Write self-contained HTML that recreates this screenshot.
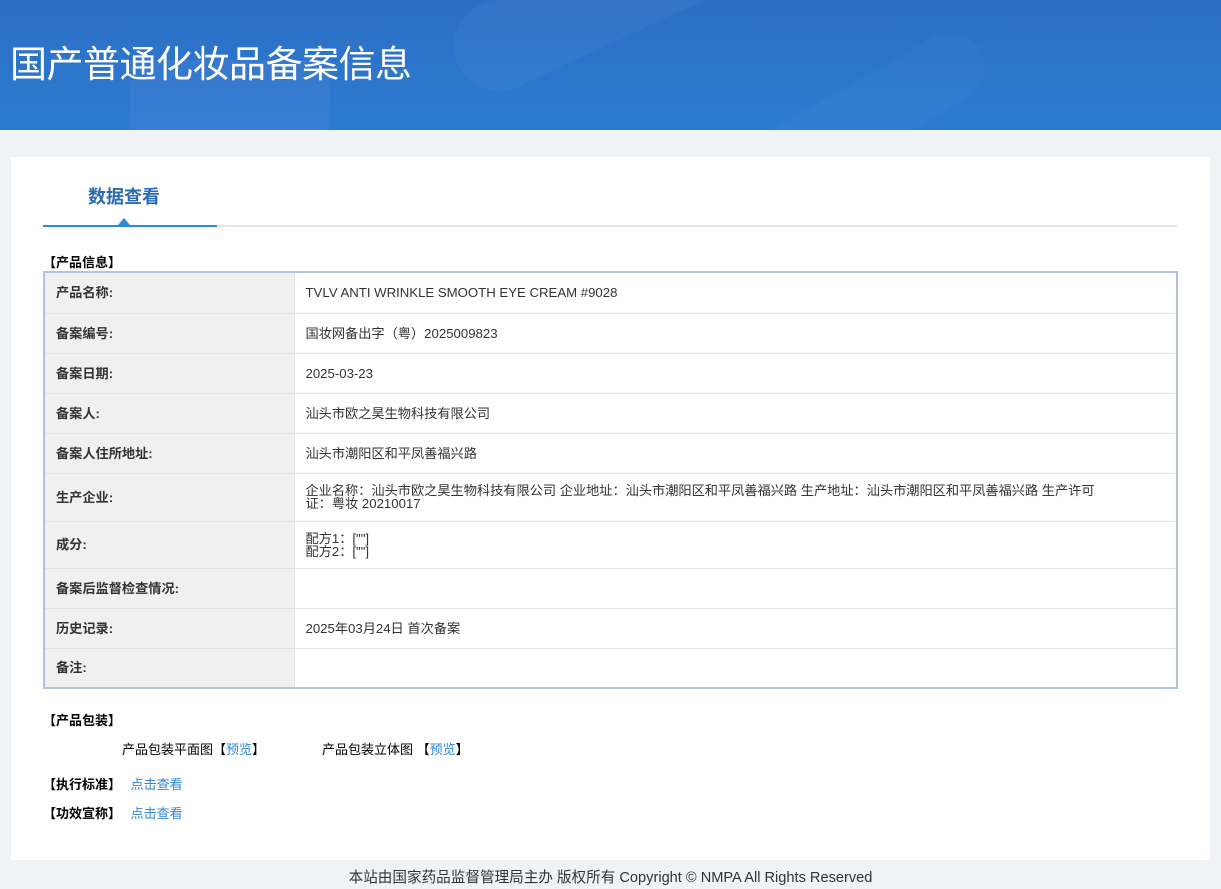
<!DOCTYPE html>
<html><head><meta charset="utf-8"><style>
*{margin:0;padding:0;box-sizing:border-box}
body{width:1221px;height:889px;background:#eff3f6;font-family:"Liberation Sans","Noto Sans CJK SC",sans-serif;font-size:13px;color:#333;position:relative;overflow:hidden}
.hd{position:absolute;left:0;top:0;width:1221px;height:130px;background:linear-gradient(180deg,#2c6fc4 0%,#2b7bd2 100%);overflow:hidden}
.hd h1{position:absolute;left:10px;top:34px;font-size:37px;font-weight:normal;color:#fff;letter-spacing:-0.5px;font-family:"Noto Sans CJK SC",sans-serif}
.panel{position:absolute;left:11px;top:157px;width:1199px;height:703px;background:#fff}
.tab{position:absolute;left:88px;top:183px;font-size:18px;font-weight:bold;color:#2a6ab0}
.line{position:absolute;left:43px;top:225px;width:1134px;height:2px;background:#e4e6ea}
.line2{position:absolute;left:43px;top:225px;width:174px;height:2px;background:#2e87d8}
.tri{position:absolute;left:118px;top:218px;width:0;height:0;border-left:6px solid transparent;border-right:6px solid transparent;border-bottom:7px solid #2e87d8}
.sec{position:absolute;font-weight:bold;color:#000;font-size:13px}
table{position:absolute;left:43px;top:271px;width:1135px;border-collapse:collapse;border:2px solid #b3c4e2}
td{border:1px solid #e3e3e3;padding:0 11px;font-size:13.2px;line-height:13px}
td.l{width:250px;background:#f0f0f0;font-weight:bold;color:#333}
a{color:#2e87d8;text-decoration:none}
.ft{position:absolute;left:0;top:866px;width:1221px;text-align:center;font-size:14.6px;color:#333}
</style></head><body>
<div class="hd">
<div style="position:absolute;left:440px;top:-60px;width:380px;height:90px;border-radius:45px;background:rgba(255,255,255,.03);transform:rotate(-25deg)"></div>
<div style="position:absolute;left:130px;top:60px;width:200px;height:80px;background:rgba(120,150,230,.15)"></div>
<div style="position:absolute;left:700px;top:90px;width:300px;height:70px;border-radius:35px;background:rgba(255,255,255,.025);transform:rotate(-30deg)"></div>
<h1>国产普通化妆品备案信息</h1></div>
<div class="panel"></div>
<div class="tab">数据查看</div>
<div class="line"></div><div class="line2"></div><div class="tri"></div>
<div class="sec" style="left:43px;top:252px">【产品信息】</div>
<table>
<tr style="height:41px"><td class="l">产品名称:</td><td>TVLV ANTI WRINKLE SMOOTH EYE CREAM #9028</td></tr>
<tr style="height:40px"><td class="l">备案编号:</td><td>国妆网备出字（粤）2025009823</td></tr>
<tr style="height:40px"><td class="l">备案日期:</td><td>2025-03-23</td></tr>
<tr style="height:40px"><td class="l">备案人:</td><td>汕头市欧之昊生物科技有限公司</td></tr>
<tr style="height:40px"><td class="l">备案人住所地址:</td><td>汕头市潮阳区和平凤善福兴路</td></tr>
<tr style="height:48px"><td class="l">生产企业:</td><td>企业名称：汕头市欧之昊生物科技有限公司 企业地址：汕头市潮阳区和平凤善福兴路 生产地址：汕头市潮阳区和平凤善福兴路 生产许可<br>证：粤妆 20210017</td></tr>
<tr style="height:47px"><td class="l">成分:</td><td>配方1：[""]<br>配方2：[""]</td></tr>
<tr style="height:40px"><td class="l">备案后监督检查情况:</td><td></td></tr>
<tr style="height:40px"><td class="l">历史记录:</td><td>2025年03月24日 首次备案</td></tr>
<tr style="height:40px"><td class="l">备注:</td><td></td></tr>
</table>
<div class="sec" style="left:43px;top:710px">【产品包装】</div>
<div style="position:absolute;left:122px;top:739px;color:#000">产品包装平面图【<a>预览</a>】</div>
<div style="position:absolute;left:322px;top:739px;color:#000">产品包装立体图 【<a>预览</a>】</div>
<div class="sec" style="left:43px;top:774px">【执行标准】 <a style="font-weight:normal;margin-left:6px">点击查看</a></div>
<div class="sec" style="left:43px;top:803px">【功效宣称】 <a style="font-weight:normal;margin-left:6px">点击查看</a></div>
<div class="ft">本站由国家药品监督管理局主办 版权所有 Copyright © NMPA All Rights Reserved</div>
</body></html>
